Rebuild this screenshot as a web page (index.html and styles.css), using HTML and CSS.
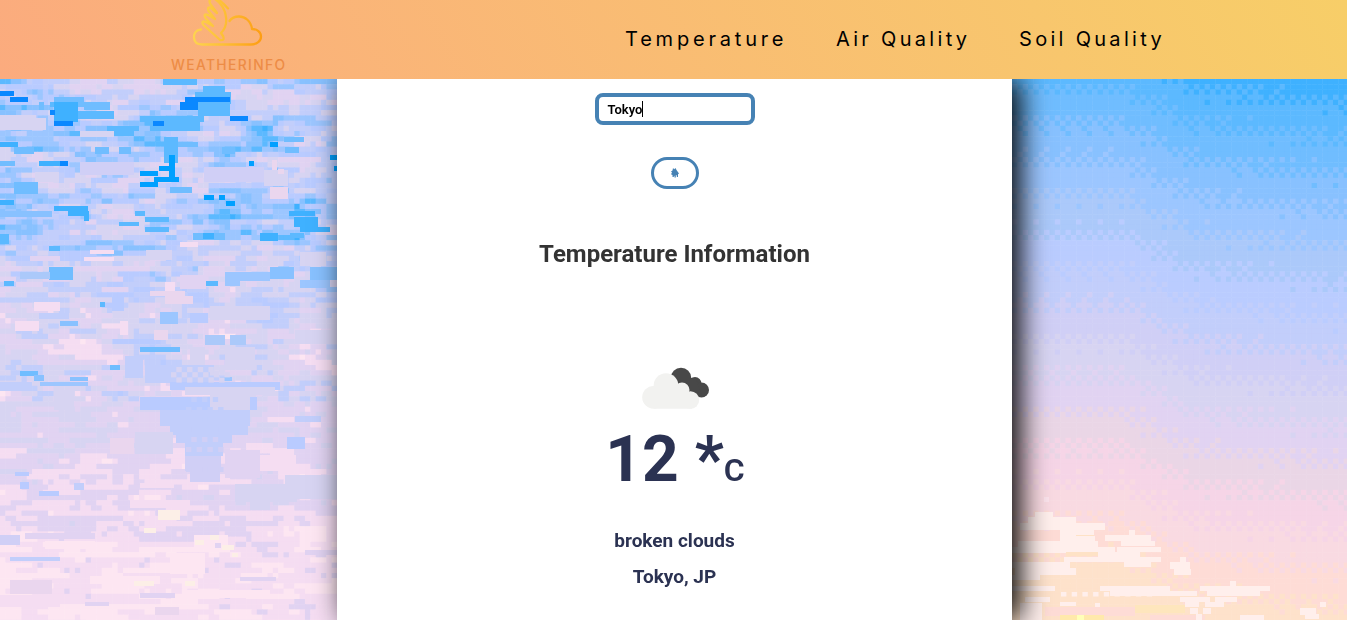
FILE: index.html
```html
<!DOCTYPE html>
<html lang="en">
<head>
<meta charset="utf-8">
<title>WeatherInfo</title>
<link rel="stylesheet" href="styles.css">
</head>
<body>
<header class="topbar">
  <a class="brand">
    <svg class="brand-mark" viewBox="0 0 74 48" width="74" height="48" fill="none" stroke-width="2.3" stroke-linecap="round" stroke-linejoin="round">
      <defs><linearGradient id="sun" x1="3" x2="72" y1="0" y2="0" gradientUnits="userSpaceOnUse"><stop offset="0" stop-color="#fdd44f"/><stop offset=".45" stop-color="#fdbf35"/><stop offset="1" stop-color="#fd9d13"/></linearGradient></defs>
      <g stroke="url(#sun)">
        <path d="M11 29.5C5.500 30 3.800 34 4 37.500C4.300 42 7.500 44.500 12 44.500H61C67 44.500 71 41 71 36.500C71 32 67 29 62 29C61 21 55 16.500 49 16.500C45 16.500 41.500 18 39.500 21"/>
        <path d="M25-1C31 3 35 9 36 17C37 24 35 29 31 33L33 36Q35 41 30 40L13 24.500Q11 20 16 22L23 26L15.500 18Q13 13 18 15L25 19L18.500 11Q17 6 21 8L27 13L21 5Q18 1 21-1"/>
        <path d="M28-1Q33 3 38 8.500"/>
      </g>
    </svg>
    <span class="brand-name">WEATHERINFO</span>
  </a>
  <nav class="links"><a class="link-temp">Temperature</a><a class="link-air">Air Quality</a><a class="link-soil">Soil Quality</a></nav>
</header>
<main class="stage">
  <canvas class="sky" id="sky" width="1347" height="541"></canvas>
  <section class="card">
    <div class="field"><span class="value">Tokyo</span><span class="caret"></span></div>
    <button class="go" aria-label="Search"><svg width="10" height="12" viewBox="0 0 10 12"><path fill="#4682b4" d="M3 1L4.200 2.200L5.500 1L6.500 3L9 6.500L8 7.200V10H6.800V8.200H5.800V10.500H4.500V8.500L3.500 10H2.500V8L1 7.200L2 5.500L1 4.500L2.500 3.500Z"/></svg></button>
    <h2 class="title">Temperature Information</h2>
    <svg class="icon" width="70" height="44" viewBox="0 0 70 44">
      <g fill="#484848"><circle cx="41" cy="12" r="10.300"/><circle cx="55" cy="17.500" r="6.500"/><circle cx="61.500" cy="24" r="7.500"/><path d="M36 12L56 12L62 31L54 31Z"/></g>
      <g fill="#f2f2f0"><circle cx="13.600" cy="31.300" r="11.400"/><circle cx="26" cy="19.500" r="12.300"/><circle cx="42" cy="24" r="7.500"/><circle cx="50.500" cy="34" r="8.700"/><path d="M14 24H45L52 30V42.700H13.600Z"/></g>
    </svg>
    <p class="reading">12 *<span class="unit">C</span></p>
    <p class="line">broken clouds</p>
    <p class="line">Tokyo, JP</p>
  </section>
</main>
<script src="sky.js"></script>
</body>
</html>
```
FILE: styles.css
```css
* { box-sizing: border-box; }
body { margin: 0; height: 620px; overflow: hidden; font-family: Roboto, sans-serif; background: #fff; }
.topbar { height: 79px; display: flex; justify-content: space-between; padding: 0 170px 0 171px; background: linear-gradient(62deg, #fbab7e 0%, #f7ce68 100%); overflow: hidden; }
.brand { width: 116px; display: flex; flex-direction: column; }
.brand-mark { margin-left: 19px; display: block; }
.brand-name { font: 500 13.8px/16px Inter, sans-serif; letter-spacing: 1.4px; color: #ed8c46; margin-top: 9px; white-space: nowrap; }
.links { display: grid; grid-template-columns: 211px 183px 158px; font: 400 20px/78px Inter, sans-serif; color: #000; white-space: nowrap; }
.link-temp { letter-spacing: 3.8px; }
.link-air, .link-soil { letter-spacing: 3.3px; }
.stage { display: grid; grid-template-columns: 337px 675px 335px; grid-template-rows: 541px; }
.sky { grid-column: 1 / 4; grid-row: 1; display: block; }
.card { grid-column: 2; grid-row: 1; z-index: 1; background: #fff; box-shadow: 8px 0 27px #000; clip-path: inset(0 -50px 0 -50px); display: flex; flex-direction: column; align-items: center; padding-top: 14px; color: #2b3252; }
.field { width: 160px; height: 32px; border: 4px solid #4682b4; border-radius: 8px; display: flex; align-items: center; padding-left: 9px; font-size: 13px; font-weight: 600; color: #000; }
.caret { width: 1px; height: 16px; background: #000; }
.go { width: 48px; height: 32px; margin-top: 32px; border: 3px solid #4682b4; border-radius: 16px; background: #fff; padding: 0; display: flex; align-items: center; justify-content: center; }
.title { margin: 49px 0 0; font-size: 24px; line-height: 32px; font-weight: 700; color: #333; }
.icon { margin-top: 96px; display: block; }
.reading { margin: 12px 0 0 1px; font-size: 64px; line-height: 76px; font-weight: 700; white-space: nowrap; }
.unit { font-size: 32px; font-weight: 600; }
.line { margin: 0; font-size: 19px; line-height: 36px; font-weight: 700; }
.reading + .line { margin-top: 15px; }
```
FILE: sky.js
```js
// Paints the pixel-art sky: streaked clouds on the left, dithered sunset on the right.
const ctx = document.getElementById('sky').getContext('2d');
const CW = 5.35, CH = 5.2, TOP = 79;
const clouds = ['#0a88ff', '#00a0ff', '#3fb1ff', '#5cb9ff', '#70bdff', '#88c1ff', '#9cc6ff', '#abc9fa', '#b9cbff', '#c2cefb', '#d0cff6', '#d7d4f2', '#e1d3f2', '#ead6ee', '#f5ddf2', '#fde6f2', '#fcefe7'];
const sunset = ['#3fb1ff', '#5cb9ff', '#70bdff', '#88c1ff', '#9cc6ff', '#abc9fa', '#baccff', '#c2cefb', '#d0cff6', '#d7d4f2', '#e1d3f2', '#ead6e6', '#f6d5e7', '#f9dae2', '#fedcd6', '#fee2cb', '#fee4c2'];
const clamp = (n, a, b) => Math.max(a, Math.min(b, n));
const hash = (x, y) => { const s = Math.sin(x * 127.1 + y * 311.7) * 43758.5453; return s - Math.floor(s); };
const noise = (x, y) => {
  const i = Math.floor(x), j = Math.floor(y), u = x - i, v = y - j;
  return (hash(i, j) * (1 - u) + hash(i + 1, j) * u) * (1 - v) + (hash(i, j + 1) * (1 - u) + hash(i + 1, j + 1) * u) * v;
};
const put = (x, y, w, h, c) => { ctx.fillStyle = c; ctx.fillRect(x, y - TOP, w, h); };

const tone = [[79, 8.3], [110, 7.6], [200, 8], [240, 8], [270, 9.7], [310, 10.6], [350, 11], [420, 11.6], [480, 12.8], [540, 13.8], [620, 14.3]];
const base = y => {
  for (let k = 1; k < tone.length; k++) if (y <= tone[k][0]) {
    const a = tone[k - 1], b = tone[k];
    return a[1] + (b[1] - a[1]) * (y - a[0]) / (b[0] - a[0]);
  }
  return 14.3;
};
for (let r = 0; r < 105; r++) for (let c = 0; c < 66; c++) {
  const y = TOP + r * CH;
  const amp = y < 280 ? 12 : y < 400 ? 7.5 : 4.8;
  // Streaks are runs of one tone whose start shifts from row to row.
  const run = Math.floor(c / 5 + hash(r, 7) * 5), fine = Math.floor(c / 2 + hash(r, 3) * 2);
  const n = noise(c / 7, r / 2.5) * .5 + hash(run, r) * .32 + hash(fine + 90, r) * .18;
  const v = base(y) + (n - .5) * amp * 1.25;
  const q = Math.round(v / 1.5) * 1.5;
  put(c * CW, y, CW + .5, CH + .5, clouds[clamp(Math.round(q), 2, y < 280 ? 12 : 15)]);
}

// Named streaks: x, y, width, height, palette index.
[
  [0,115,36,15,11],[36,118,10,12,11],[0,91,14,5,0],[10,97,18,5,0],[54,97,30,10,4],[84,102,26,8,4],[50,102,5,5,3],
  [54,102,24,20,2],[78,111,36,8,3],[54,121,19,5,0],[50,110,5,5,0],[39,102,5,8,4],
  [163,79,34,6,3],[203,86,22,10,3],[195,92,36,12,3],[198,104,32,12,3],[140,116,64,6,3],[150,121,50,10,3],[180,102,18,8,0],[185,97,45,5,0],[230,116,18,5,0],
  [153,121,11,5,0],[107,126,32,5,3],[114,131,20,5,3],[80,131,34,6,11],[164,137,14,26,3],[178,142,20,5,4],[0,142,18,5,2],[14,147,20,7,4],[95,147,14,7,4],[119,147,12,7,4],
  [270,142,8,5,1],[284,137,20,5,4],[222,147,13,7,4],[285,147,14,6,4],[39,161,28,5,2],[60,161,8,5,0],[0,161,15,5,4],[80,162,54,13,10],[35,172,24,10,11],
  [169,155,6,23,1],[159,166,14,5,1],[140,171,18,5,1],[154,177,25,5,1],[140,182,18,5,1],[249,161,5,5,1],[330,155,7,5,1],[334,166,3,5,1],
  [14,182,24,12,4],[204,167,60,15,10],[264,170,24,16,11],[272,160,5,10,13],[278,169,6,5,13],[270,187,18,12,13],[170,187,22,6,4],[204,195,10,5,1],[219,195,6,5,1],[226,201,9,5,1],
  [0,200,14,5,2],[54,206,34,5,2],[68,211,21,5,2],[84,216,5,5,2],[0,211,52,6,5],[135,211,10,5,3],[145,217,24,5,3],[119,222,20,4,3],[145,227,24,5,3],
  [289,211,26,5,2],[294,217,24,10,2],[300,227,30,5,2],[193,233,32,7,4],[203,233,11,6,2],[260,233,18,8,2],[290,233,14,5,3],[0,234,9,10,3],[49,246,11,5,3],
  [90,250,24,4,14],[30,256,30,5,12],[84,257,30,4,14],[146,250,26,10,11],[180,242,18,5,14],[300,252,26,14,11],
  [49,267,24,13,4],[20,272,30,7,7],[225,272,45,9,6],[225,280,15,6,6],[270,267,24,12,5],[310,267,27,13,5],[300,280,30,8,6],[204,281,14,5,3],[4,281,10,5,3],[180,275,26,14,12],
  [165,282,10,12,14],[150,291,35,5,13],[165,296,28,8,13],[34,302,26,9,14],[100,302,5,5,3],[112,297,12,14,8],[39,313,30,6,9],[15,321,24,10,14],[60,321,18,5,5],[160,312,18,12,6],
  [190,313,18,10,8],[210,306,60,14,11],[120,321,8,14,14],[154,330,14,10,13],[205,335,20,10,7],[230,335,16,10,7],[295,330,42,14,11],
  [140,347,40,5,4],[190,347,15,18,11],[225,347,30,22,11],[125,356,18,22,9],[145,365,65,18,9],[110,365,10,5,4],[20,371,18,5,4],[34,375,10,6,5],[70,377,18,4,5],[220,377,12,4,6],
  [0,382,32,9,9],[40,382,48,4,6],[54,390,20,20,11],[170,382,110,8,8],[185,387,90,8,11],[210,392,46,18,11],[140,397,70,13,8],[160,410,90,16,9],[250,397,7,13,8],[170,425,78,10,9],[176,435,56,8,9],[185,442,38,14,9],[185,456,36,15,10],[190,470,30,12,10],
  [135,432,38,22,11],[110,438,24,16,13],[225,450,35,28,12],[260,455,36,16,14],[270,449,24,8,14],[295,416,26,6,9],[287,437,18,12,8],
  [235,484,62,18,11],[250,502,20,8,11],[285,475,52,24,11],[140,483,34,5,14],[15,472,14,4,8],[20,482,9,7,8],[39,491,20,5,8],[74,483,10,7,9],
  [130,500,60,8,14],[158,510,22,10,16],[144,528,12,5,16],[194,535,34,14,15],[195,540,9,5,16],[210,535,9,5,16],[222,545,12,5,16],[215,543,6,5,12],[232,553,6,4,16],[0,535,20,10,10],[25,533,70,6,12],
  [10,557,50,4,9],[45,541,50,8,15],[170,553,35,21,15],[40,568,20,6,15],[90,576,70,8,15],[10,580,42,14,13],[134,581,20,5,16],[185,581,10,5,16],
  [0,595,60,12,14],[85,602,24,4,12],[155,607,24,8,13],[185,590,85,8,15],[140,593,35,5,12],[305,550,32,5,12],[240,577,36,4,12]
].forEach(([x, y, w, h, i]) => put(x, y, w, h, clouds[i]));

// Checkered patches around the open-sky wedge.
for (let r = 0; r < 8; r++) for (let c = 0; c < 7; c++)
  if ((r + c) % 2) put(186 + c * 5.35, 397 + r * 10, 5.4, 5, clouds[r < 4 ? 9 : 10]);
for (let r = 0; r < 3; r++) for (let c = 0; c < 11; c++)
  if ((r + c) % 2) put(171 + c * 5.35, 367 + r * 5.2, 5.4, 5.2, clouds[11]);

const bayer = [[0, 8, 2, 10], [12, 4, 14, 6], [3, 11, 1, 9], [15, 7, 13, 5]];
const skyShift = x => x < 1120 ? 1.4 : x < 1190 ? 1.4 - (x - 1120) / 70 : .4 - .4 * clamp((x - 1190) / 140, 0, 1);
for (let r = 0; r < 105; r++) for (let c = 0; c < 64; c++) {
  const x = 1012 + c * CW, y = TOP + r * CH;
  const v = (y - 81.7) / 36 + skyShift(x) + (bayer[r % 4][c % 4] / 16 - .47) * .8;
  put(x, y, CW + .5, CH + .5, sunset[clamp(Math.round(v), 0, 15)]);
}

const C = '#ffefec', P = '#fedcd6', Y = '#fee2c6';
[
  [1035,512,18,6,C],[1028,517,48,6,C],[1020,523,85,7,C],[1044,497,5,5,'#fbe3ec'],[1060,530,34,6,C],[1012,531,48,9,P],[1076,535,18,5,Y],
  [1060,536,35,12,C],[1018,541,80,6,C],[1105,535,46,6,C],[1129,530,6,5,C],[1121,541,34,5,C],[1012,547,103,6,C],[1117,547,44,5,C],[1066,552,45,4,Y],
  [1098,552,42,5,C],[1064,557,97,5,C],[1124,562,27,5,C],[1010,562,60,6,C],[1015,568,61,7,C],[1012,575,28,5,C],[1170,562,20,7,C],[1180,557,6,5,C],[1174,569,17,6,C],
  [1012,586,43,5,C],[1100,586,70,5,C],[1200,586,70,5,C],[1230,581,6,5,C],[1110,591,87,5,C],[1207,591,53,5,C],[1180,597,30,5,C],[1215,597,22,5,C],
  [1025,597,25,5,C],[1020,603,22,17,C],[1185,602,14,5,C],[1205,602,19,5,C],[1060,602,16,4,C],[1045,607,90,9,P],[1135,605,50,8,'#fee6bd'],[1095,603,5,4,C],
  [1190,608,8,6,C],[1203,608,8,6,C],[1300,608,16,7,C],[1305,614,14,5,C],[1320,602,6,5,C],[1060,615,44,5,'#ffe9ab'],[1077,615,7,5,'#ffffb8'],[1150,615,55,5,P],[1240,615,24,5,C],[1196,614,6,6,C]
].forEach(a => put(...a));
for (let k = 0; k < 9; k++) put(1061 + k * 10.7, 592, 5.4, 4.500, C);
```
